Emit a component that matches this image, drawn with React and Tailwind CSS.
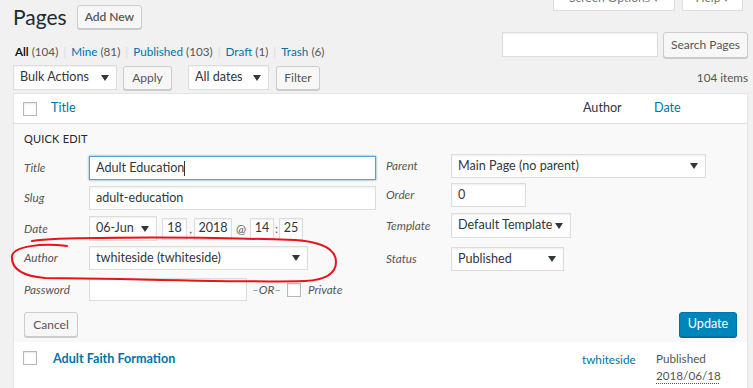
import React from 'react';

const Arrow = () => (
  <svg width="8" height="6" viewBox="0 0 8 6" className="shrink-0">
    <polygon points="0,0 8,0 4,6" fill="#32373c" />
  </svg>
);

const Select = ({ value, className = '' }) => (
  <div
    className={`flex items-center justify-between bg-white border border-[#ddd] shadow-[inset_0_1px_2px_rgba(0,0,0,0.07)] pl-[6px] pr-[7px] text-[12.6px] text-[#32373c] ${className}`}
  >
    <span className="truncate">{value}</span>
    <Arrow />
  </div>
);

const Input = ({ value = '', className = '' }) => (
  <div
    className={`flex items-center bg-white border border-[#ddd] shadow-[inset_0_1px_2px_rgba(0,0,0,0.07)] px-[6px] text-[12.6px] text-[#32373c] ${className}`}
  >
    {value}
  </div>
);

const Button = ({ children, className = '' }) => (
  <div
    className={`flex items-center justify-center bg-[#f7f7f7] border border-[#ccc] rounded-[3px] shadow-[0_1px_0_#ccc] text-[12px] text-[#555] ${className}`}
  >
    {children}
  </div>
);

const Checkbox = () => (
  <div className="w-[14px] h-[14px] bg-white border border-[#b4b9be] shadow-[inset_0_1px_2px_rgba(0,0,0,0.1)]" />
);

const Label = ({ children, className = '' }) => (
  <span className={`w-[65px] shrink-0 italic text-[11.7px] text-[#555] ${className}`}>{children}</span>
);

const App = () => {
  return (
    <div className="relative w-[753px] h-[388px] overflow-hidden bg-[#f1f1f1] pl-[13px] pr-[5px] font-['Lato','Liberation_Sans',sans-serif] text-[#444]">
      {/* header */}
      <div className="flex items-start h-[32px]">
        <h1 className="text-[21px] leading-[28px] text-[#23282d] mt-[3px]">Pages</h1>
        <Button className="ml-[10px] mt-[5px] h-[24px] px-[7px] text-[#0073aa] font-semibold">Add New</Button>
        <div className="ml-auto flex gap-[7px] -mt-[15px] mr-[5px]">
          <div className="w-[122px] h-[26px] bg-white border border-[#ddd] flex items-center justify-center text-[12px] text-[#72777c]">
            Screen Options ▾
          </div>
          <div className="w-[61px] h-[26px] bg-white border border-[#ddd] flex items-center justify-center text-[12px] text-[#72777c]">
            Help ▾
          </div>
        </div>
      </div>

      {/* filters + search */}
      <div className="flex items-start h-[26px]">
        <div className="mt-[11px] ml-[2px] leading-[16px] text-[11.7px] text-[#555] flex gap-[5px]">
          <span><b className="text-black font-semibold">All</b> (104)</span>
          <span className="text-[#ddd]">|</span>
          <span><span className="text-[#0073aa]">Mine</span> (81)</span>
          <span className="text-[#ddd]">|</span>
          <span><span className="text-[#0073aa]">Published</span> (103)</span>
          <span className="text-[#ddd]">|</span>
          <span><span className="text-[#0073aa]">Draft</span> (1)</span>
          <span className="text-[#ddd]">|</span>
          <span><span className="text-[#0073aa]">Trash</span> (6)</span>
        </div>
        <div className="ml-auto flex gap-[5px]">
          <Input className="w-[156px] h-[25px]" />
          <Button className="w-[85px] h-[26px] text-[12.6px]">Search Pages</Button>
        </div>
      </div>

      {/* tablenav */}
      <div className="flex items-center mt-[7px] h-[25px]">
        <Select value="Bulk Actions" className="w-[104px] h-[25px]" />
        <Button className="ml-[6px] w-[49px] h-[24px] text-[12.6px]">Apply</Button>
        <Select value="All dates" className="ml-[16px] w-[81px] h-[25px]" />
        <Button className="ml-[7px] w-[44px] h-[24px]">Filter</Button>
        <span className="ml-auto text-[11.7px] text-[#555]">104 items</span>
      </div>

      {/* table */}
      <div className="mt-[3px] border border-[#e5e5e5] bg-white">
        <div className="grid grid-cols-[37px_532px_71px_1fr] items-center h-[30px] border-b border-[#e1e1e1] text-[12.6px]">
          <div className="pl-[9px]"><Checkbox /></div>
          <span className="text-[#0073aa]">Title</span>
          <span className="text-[#32373c]">Author</span>
          <span className="text-[#0073aa]">Date</span>
        </div>

        {/* quick edit */}
        <div className="bg-[#f9f9f9] pt-[5px] px-[10px] pb-[5px]">
          <div className="leading-[20px] text-[11px] text-[#23282d] uppercase tracking-[0.2px]">Quick Edit</div>
          <div className="flex">
            <div className="w-[352px] mt-[7px]">
              <div className="flex items-center h-[24px] mb-[6px]">
                <Label>Title</Label>
                <div className="flex-1 h-[24px] flex items-center bg-white border border-[#5b9dd9] shadow-[0_0_2px_rgba(30,140,190,0.8)] px-[6px] text-[12.6px] text-[#32373c]">
                  Adult Education<span className="w-px h-[15px] bg-[#32373c]" />
                </div>
              </div>
              <div className="flex items-center h-[24px] mb-[6px]">
                <Label>Slug</Label>
                <Input value="adult-education" className="flex-1 h-[24px]" />
              </div>
              <div className="flex items-center h-[25px] mb-[5px] text-[12px] text-[#555]">
                <Label>Date</Label>
                <Select value="06-Jun" className="w-[68px] h-[25px]" />
                <Input value="18" className="ml-[5px] w-[25px] h-[22px] justify-center !px-0" />
                <span className="w-[7px] text-center">,</span>
                <Input value="2018" className="w-[38px] h-[22px] justify-center !px-0" />
                <span className="w-[18px] text-center leading-[14px]">@</span>
                <Input value="14" className="w-[24px] h-[22px] justify-center !px-0" />
                <span className="w-[5px] text-center">:</span>
                <Input value="25" className="w-[24px] h-[22px] justify-center !px-0" />
              </div>
              <div className="flex items-center h-[24px] mb-[8px]">
                <Label>Author</Label>
                <Select value="twhiteside (twhiteside)" className="w-[219px] h-[24px]" />
              </div>
              <div className="flex items-center h-[23px]">
                <Label>Password</Label>
                <Input className="w-[158px] h-[23px]" />
                <span className="ml-[5px] italic text-[11.7px] text-[#555]">–OR–</span>
                <div className="ml-[6px]"><Checkbox /></div>
                <span className="ml-[7px] italic text-[11.7px] text-[#555]">Private</span>
              </div>
            </div>

            <div className="ml-[10px] mt-[5px] flex-1">
              <div className="flex items-center h-[24px] mb-[5px]">
                <Label>Parent</Label>
                <Select value="Main Page (no parent)" className="w-[255px] h-[24px]" />
              </div>
              <div className="flex items-center h-[24px] mb-[6px]">
                <Label>Order</Label>
                <Input value="0" className="w-[75px] h-[24px]" />
              </div>
              <div className="flex items-center h-[25px] mb-[9px]">
                <Label>Template</Label>
                <Select value="Default Template" className="w-[120px] h-[25px]" />
              </div>
              <div className="flex items-center h-[24px]">
                <Label>Status</Label>
                <Select value="Published" className="w-[113px] h-[24px]" />
              </div>
            </div>
          </div>

          <div className="flex items-center justify-between mt-[11px]">
            <Button className="w-[54px] h-[25px] text-[12.6px]">Cancel</Button>
            <div className="w-[58px] h-[25px] flex items-center justify-center rounded-[3px] bg-[#0085ba] border border-[#0073aa] shadow-[0_1px_0_#006799] text-white text-[12.6px]">
              Update
            </div>
          </div>
        </div>

        {/* data row */}
        <div className="grid grid-cols-[37px_532px_71px_1fr] items-start h-[60px] pt-[7px] text-[12.6px] leading-[20px]">
          <div className="pl-[9px] pt-[2px]"><Checkbox /></div>
          <span className="pl-[2px] font-bold text-[#0073aa]">Adult Faith Formation</span>
          <span className="-ml-[1px] text-[#0073aa] text-[11.7px]">twhiteside</span>
          <div className="pl-[2px] text-[11.7px] text-[#555] leading-[17px] pt-[1px]">
            <div>Published</div>
            <div className="underline decoration-dotted underline-offset-[3px]">2018/06/18</div>
          </div>
        </div>
      </div>

      {/* hand-drawn annotation */}
      <svg className="absolute inset-0 pointer-events-none" width="753" height="388" viewBox="0 0 753 388">
        <path
          d="M67 246 C42 243 14 246 12 256 C11 268 22 276 45 278 L120 279 C200 281 270 282 305 281 C325 280 336 274 336 262 C336 250 324 242 295 240 C230 238 150 237 100 238 C70 238 45 239 32 241"
          fill="none"
          stroke="#e8141b"
          strokeWidth="2"
          strokeLinecap="round"
        />
      </svg>
    </div>
  );
};

export default App;
